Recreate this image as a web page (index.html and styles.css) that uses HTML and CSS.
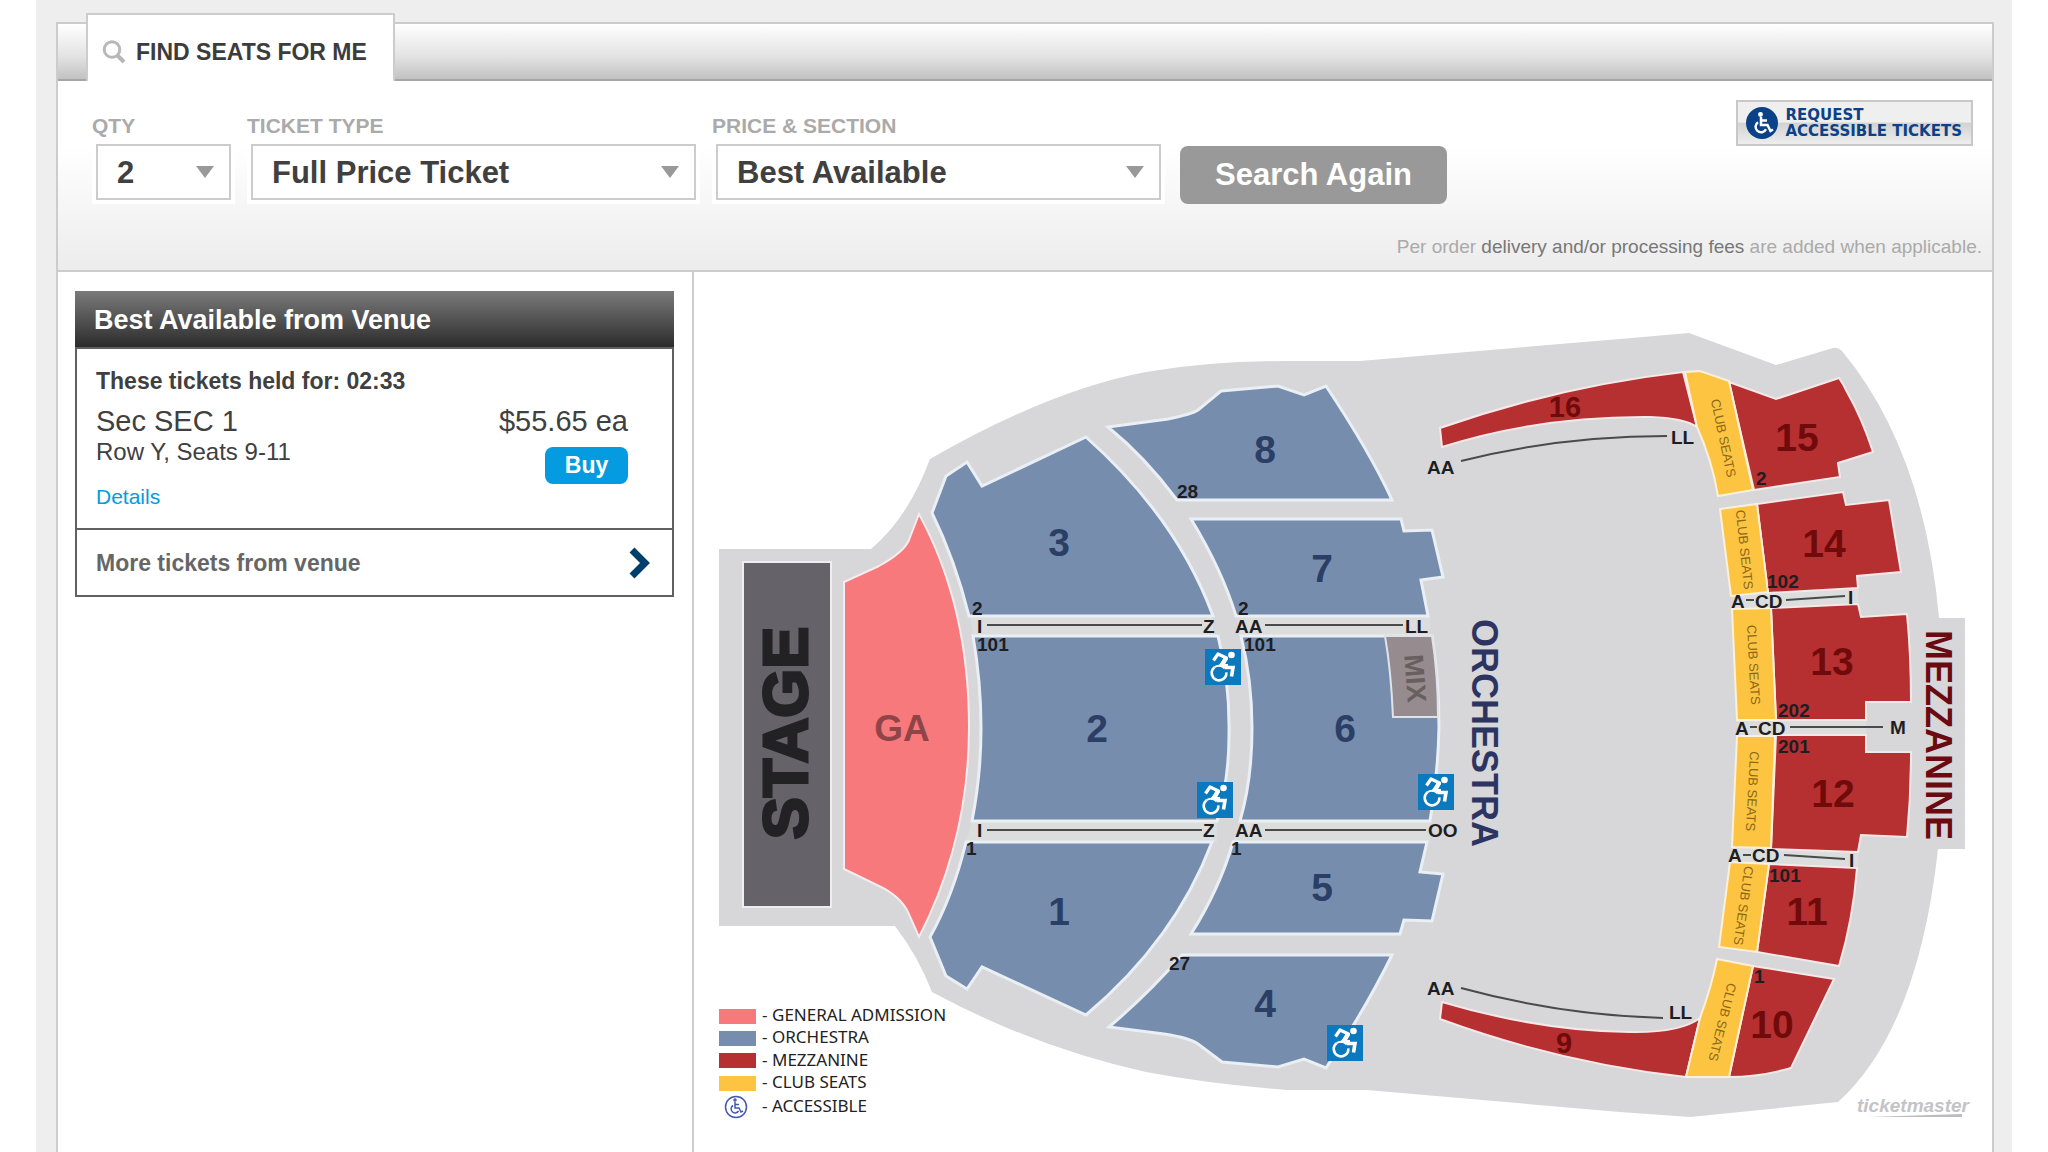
FILE: index.html
```html
<!DOCTYPE html>
<html lang="en">
<head>
<meta charset="utf-8">
<title>Find Seats For Me</title>
<link rel="stylesheet" href="styles.css">
</head>
<body>
<div class="page">
  <main class="panel">
    <nav class="tabs">
      <a class="tab" href="#find">
        <svg class="tab-icon" viewBox="0 0 24 24" aria-hidden="true"><circle cx="10" cy="9.500" r="7.800" fill="none" stroke="#b8b8b8" stroke-width="3"/><path d="M15.500 15.500L22 22" stroke="#b8b8b8" stroke-width="4"/></svg>
        FIND SEATS FOR ME
      </a>
    </nav>

    <section class="search" id="find">
      <div class="search-row">
        <form class="filters">
          <div class="field field-qty">
            <label for="qty">QTY</label>
            <div class="control"><select id="qty"><option>2</option></select></div>
          </div>
          <div class="field field-wide">
            <label for="type">TICKET TYPE</label>
            <div class="control"><select id="type"><option>Full Price Ticket</option></select></div>
          </div>
          <div class="field field-wide">
            <label for="price">PRICE &amp; SECTION</label>
            <div class="control"><select id="price"><option>Best Available</option></select></div>
          </div>
          <button class="search-button" type="button">Search Again</button>
        </form>
        <a class="accessible" href="#accessible">
          <svg class="accessible-icon" viewBox="0 0 34 34" aria-hidden="true"><circle cx="17" cy="17" r="16" fill="#0b4287"/><g fill="none" stroke="#fff" stroke-width="2.500"><circle cx="15.500" cy="8.500" r="1.200"/><path d="M16 11v8h6.500l3 6 2.500-1.500M16 14.500h6"/><path d="M13 16.200a5.500 5.500 0 1 0 8 7"/></g></svg>
          <span>REQUEST<br>ACCESSIBLE TICKETS</span>
        </a>
      </div>
      <p class="fees">Per order <a href="#fees">delivery and/or processing fees</a> are added when applicable.</p>
    </section>

    <div class="content">
      <aside class="sidebar">
        <section class="card">
          <h2 class="card-title">Best Available from Venue</h2>
          <div class="offer">
            <p class="held">These tickets held for: 02:33</p>
            <div class="offer-row">
              <div>
                <p class="big">Sec SEC 1</p>
                <p class="seats">Row Y, Seats 9-11</p>
                <a class="details" href="#details">Details</a>
              </div>
              <div class="offer-buy">
                <p class="big">$55.65 ea</p>
                <button class="buy" type="button">Buy</button>
              </div>
            </div>
          </div>
          <a class="more" href="#more">More tickets from venue
            <svg class="chevron" viewBox="0 0 22 32" aria-hidden="true"><path d="M3 3L16 16L3 29" fill="none" stroke="#003e6b" stroke-width="7"/></svg>
          </a>
        </section>
      </aside>

      <svg class="map" viewBox="694 272 1298 880" role="img" aria-label="Seating chart">
        <defs>
          <g id="wheelchair">
            <rect width="36" height="36" fill="#0a79bd"/>
            <circle cx="26.500" cy="6" r="3.300" fill="#fff"/>
            <path d="M8.500 11.500L13 5L21.500 9L15.500 16.500H23" fill="none" stroke="#fff" stroke-width="3.200" stroke-linejoin="round"/>
            <path d="M19 8l4 2-4.500 8h-5z" fill="#fff"/>
            <path d="M19.500 18.500h8.500l-1.500 9" fill="none" stroke="#fff" stroke-width="3.600"/>
            <path d="M9.500 18.300a7.300 7.300 0 1 0 11.800 5" fill="none" stroke="#fff" stroke-width="2.600"/>
            <path d="M9.500 18.300a7.300 7.300 0 0 1 10 1" fill="none" stroke="#fff" stroke-width="2"/>
          </g>
        </defs>

        <path class="floor" d="M719 549H871Q908 518 930 459Q1050 390 1146 372Q1210 361 1287 361H1360L1620 339L1689 333L1776 365L1833 348Q1838 347 1842 351Q1924 450 1939 618H1965V849H1938Q1918 1030 1838 1102L1690 1117L1620 1112L1367 1090H1287Q1210 1084 1146 1072Q1036 1048 932 992Q918 956 895 926H719Z"/>

        <g class="aisle">
          <path d="M970 616H1213V636H973ZM1236 616H1430V636H1240ZM972 821H1217V842H966ZM1240 821H1430V842H1233Z"/>
          <path d="M1733 596L1858 588V604L1733 609ZM1737 720H1866V735H1737ZM1732 847L1858 852V868L1730 862Z"/>
        </g>

        <rect class="stage" x="743" y="562" width="88" height="345"/>
        <path class="ga" d="M844 582L879 566Q904 552 909 540L919 514Q969 606 969 727Q969 840 919 937L908 912Q900 896 879 886L844 869Z"/>

        <g class="orchestra">
          <path d="M967 462L982 486L1086 437Q1177 518 1213 616H969Q955 560 932 513L946 476Z"/>
          <path d="M973 636H1218Q1230 682 1229 735Q1229 780 1217 821H972Q981 775 981 728Q981 682 973 636Z"/>
          <path d="M966 842H1212Q1175 940 1086 1015L982 967L967 989L946 976L930 937Q953 896 966 842Z"/>
          <path d="M1108 427L1168 419Q1192 414 1198 410L1221 391L1278 386L1304 395L1326 386Q1370 452 1392 500H1177Q1145 457 1108 427Z"/>
          <path d="M1191 519H1401L1404 531L1432 530L1443 577L1421 580L1428 616H1236Q1222 570 1191 519Z"/>
          <path d="M1241 636H1432Q1439 680 1439 727Q1438 775 1430 821H1240Q1252 780 1252 728Q1252 680 1241 636Z"/>
          <path d="M1233 842H1427L1420 872L1443 874L1432 921L1404 920L1400 934H1191Q1220 888 1233 842Z"/>
          <path d="M1182 955H1392Q1365 1010 1326 1068L1304 1059L1278 1067L1222 1062L1198 1044Q1190 1038 1164 1034L1109 1027Q1148 994 1182 955Z"/>
        </g>
        <path class="mix" d="M1385 636H1432Q1438 675 1438 717H1393Q1391 670 1385 636Z"/>

        <g class="mezzanine">
          <path d="M1440 428Q1560 386 1683 372L1697 427Q1684 418 1650 417Q1540 416 1442 447Z"/>
          <path d="M1729 382L1776 399L1839 378Q1844 385 1847 392Q1862 418 1873 452L1838 463L1840 477L1754 490Z"/>
          <path d="M1757 504L1843 492L1846 505L1889 500L1901 572L1857 576L1858 588L1768 593Z"/>
          <path d="M1771 608L1858 604L1861 617L1907 614Q1911 655 1911 702H1866V720H1776Z"/>
          <path d="M1776 735H1866V752H1911Q1911 795 1907 837L1861 835L1858 852L1771 849Z"/>
          <path d="M1769 864L1857 868Q1853 920 1839 966L1757 952Z"/>
          <path d="M1753 966L1834 979L1791 1068Q1760 1077 1729 1077Z"/>
          <path d="M1442 1002Q1540 1031 1630 1032Q1680 1033 1700 1018L1686 1077Q1560 1063 1440 1019Z"/>
        </g>
        <g class="club">
          <path d="M1685 372L1700 371L1729 381L1753 490L1718 496Q1712 460 1697 427Z"/>
          <path d="M1720 509L1757 504L1768 592L1731 596Z"/>
          <path d="M1732 609L1771 608L1776 720H1737Z"/>
          <path d="M1737 736H1775L1771 848L1732 847Z"/>
          <path d="M1730 862L1769 864L1757 952L1719 947Z"/>
          <path d="M1717 959L1753 966L1729 1077H1686L1700 1018Q1712 985 1717 959Z"/>
        </g>

        <g class="rows">
          <path d="M987 625H1202M1265 625H1403M987 830H1202M1265 830H1426"/>
          <path d="M1461 461Q1560 436 1667 436M1461 988Q1560 1015 1663 1018"/>
          <path d="M1746 600H1754M1786 600L1845 596M1750 727H1757M1790 727H1883M1743 855H1751M1784 855L1845 859"/>
        </g>

        <g class="number">
          <text x="1059" y="556">3</text><text x="1097" y="742">2</text><text x="1059" y="925">1</text>
          <text x="1265" y="463">8</text><text x="1322" y="582">7</text><text x="1345" y="742">6</text>
          <text x="1322" y="901">5</text><text x="1265" y="1017">4</text>
        </g>
        <g class="number number-red">
          <text x="1797" y="451">15</text><text x="1824" y="557">14</text><text x="1832" y="675">13</text>
          <text x="1833" y="807">12</text><text x="1807" y="925">11</text><text x="1772" y="1038">10</text>
        </g>
        <g class="number number-red number-small">
          <text x="1565" y="417">16</text><text x="1564" y="1053">9</text>
        </g>
        <text class="ga-name" x="902" y="741">GA</text>
        <text class="stage-name" transform="translate(807 733) rotate(-90)">STAGE</text>
        <text class="zone" transform="translate(1472 733) rotate(90)">ORCHESTRA</text>
        <text class="zone zone-red" transform="translate(1926 735) rotate(90)">MEZZANINE</text>
        <text class="mix-name" transform="translate(1406 679) rotate(86)">MIX</text>
        <g class="club-name">
          <text transform="translate(1719 439) rotate(78)">CLUB SEATS</text>
          <text transform="translate(1740 550) rotate(84)">CLUB SEATS</text>
          <text transform="translate(1749 665) rotate(87)">CLUB SEATS</text>
          <text transform="translate(1748 791) rotate(93)">CLUB SEATS</text>
          <text transform="translate(1739 905) rotate(98)">CLUB SEATS</text>
          <text transform="translate(1718 1021) rotate(104)">CLUB SEATS</text>
        </g>

        <g class="label">
          <text x="1177" y="498">28</text><text x="972" y="615">2</text><text x="977" y="633">I</text><text x="1203" y="633">Z</text><text x="977" y="651">101</text>
          <text x="1238" y="615">2</text><text x="1235" y="633">AA</text><text x="1405" y="633">LL</text><text x="1244" y="651">101</text>
          <text x="977" y="837">I</text><text x="1203" y="837">Z</text><text x="966" y="855">1</text>
          <text x="1235" y="837">AA</text><text x="1428" y="837">OO</text><text x="1231" y="855">1</text><text x="1169" y="970">27</text>
          <text x="1427" y="474">AA</text><text x="1671" y="444">LL</text><text x="1427" y="995">AA</text><text x="1669" y="1019">LL</text>
          <text x="1756" y="485">2</text><text x="1767" y="588">102</text>
          <text x="1731" y="608">A</text><text x="1755" y="608">CD</text><text x="1848" y="604">I</text>
          <text x="1778" y="717">202</text><text x="1735" y="735">A</text><text x="1758" y="735">CD</text><text x="1890" y="734">M</text><text x="1778" y="753">201</text>
          <text x="1728" y="862">A</text><text x="1752" y="862">CD</text><text x="1849" y="867">I</text><text x="1769" y="882">101</text><text x="1754" y="983">1</text>
        </g>

        <use href="#wheelchair" x="1205" y="649"/>
        <use href="#wheelchair" x="1197" y="782"/>
        <use href="#wheelchair" x="1418" y="774"/>
        <use href="#wheelchair" x="1327" y="1025"/>

        <g class="legend">
          <rect x="719" y="1009" width="37" height="15" fill="#f8797b"/><text x="762" y="1021">-</text><text x="772" y="1021">GENERAL ADMISSION</text>
          <rect x="719" y="1031" width="37" height="15" fill="#778dae"/><text x="762" y="1043">-</text><text x="772" y="1043">ORCHESTRA</text>
          <rect x="719" y="1053" width="37" height="15" fill="#b62f31"/><text x="762" y="1066">-</text><text x="772" y="1066">MEZZANINE</text>
          <rect x="719" y="1076" width="37" height="15" fill="#fdc441"/><text x="762" y="1088">-</text><text x="772" y="1088">CLUB SEATS</text>
          <text x="762" y="1112">-</text><text x="772" y="1112">ACCESSIBLE</text>
          <g fill="none" stroke="#4358ae" stroke-width="1.500"><circle cx="736" cy="1107" r="10.500"/><circle cx="735" cy="1100" r="1"/><path d="M735 1102v6h4l2 4 2-1M735 1104.500h4M733 1105.500a4 4 0 1 0 5.500 5.500"/></g>
        </g>

        <text class="brand" x="1857" y="1112">ticketmaster</text>
        <path d="M1868 1117L1962 1114V1117Z" fill="#bcbcc0"/>
      </svg>
    </div>
  </main>
</div>
</body>
</html>
```
FILE: styles.css
```css
* { box-sizing: border-box; }

body {
  margin: 0;
  background: #fff;
  color: #404040;
  font-family: "Liberation Sans", Arial, sans-serif;
  font-size: 23px;
  line-height: 28px;
}

h2, p { margin: 0; }
a { text-decoration: none; }

.page {
  min-height: 100vh;
  margin: 0 36px;
  padding: 22px 18px 0 20px;
  background: #eee;
}

.panel {
  border: solid #ccc;
  border-width: 0 2px;
  background: #fff;
}

/* Tab strip */
.tabs {
  display: flex;
  padding-left: 28px;
  border-top: 2px solid #ccc;
  border-bottom: 2px solid #a6a6a6;
  background: linear-gradient(#fff, #e2e2e2 60%, #c2c2c2);
}

.tab {
  display: flex;
  align-items: center;
  gap: 10px;
  height: 68px;
  margin: -11px 0 -2px;
  padding: 8px 26px 0 14px;
  border: 2px solid #ccc;
  border-bottom: 0;
  background: #fff;
  color: #3c3c3c;
  font-weight: bold;
}

.tab-icon { width: 24px; height: 24px; }

/* Search form */
.search {
  padding: 19px 10px 11px 34px;
  border-bottom: 2px solid #ccc;
  background: linear-gradient(#fff 35%, #ececec);
}

.search-row {
  display: flex;
  justify-content: space-between;
  align-items: flex-start;
}

.filters {
  display: flex;
  flex: 1;
  align-items: flex-end;
  gap: 12px;
  margin-top: 14px;
}

.field {
  display: flex;
  flex-direction: column;
  gap: 2px;
}

.field-qty { width: 143px; }
.field-wide { width: 453px; }

.field label {
  color: #aaa;
  font-size: 21px;
  font-weight: bold;
  line-height: 24px;
}

.control {
  position: relative;
  padding: 4px;
  background: #fff;
}

.control::after {
  content: "";
  position: absolute;
  top: 26px;
  right: 21px;
  border: solid transparent;
  border-width: 12px 9px 0;
  border-top-color: #999;
  pointer-events: none;
}

.control select {
  display: block;
  appearance: none;
  width: 100%;
  height: 56px;
  padding: 0 19px;
  border: 2px solid #ccc;
  border-radius: 0;
  background: #fff;
  color: #404040;
  font: bold 31px "Liberation Sans", Arial, sans-serif;
}

.search-button {
  height: 58px;
  margin-left: 3px;
  padding: 0 35px;
  border: 0;
  border-radius: 8px;
  background: #999;
  color: #fff;
  font: bold 31px "Liberation Sans", Arial, sans-serif;
}

.accessible {
  display: flex;
  align-items: center;
  gap: 6px;
  height: 46px;
  margin-right: 9px;
  padding: 0 9px 0 7px;
  border: 2px solid #c8c8c8;
  background: linear-gradient(#efefef 48%, #d2d2d2 50%, #eee);
  color: #0b4287;
  font: bold 15px/16px "DejaVu Sans", Verdana, sans-serif;
  white-space: nowrap;
}

.accessible-icon { width: 34px; height: 34px; }

.fees {
  margin-top: 31px;
  color: #aaa;
  font-size: 19px;
  line-height: 24px;
  text-align: right;
}

.fees a { color: #777; }

/* Results */
.content { display: flex; }

.sidebar {
  flex: none;
  width: 636px;
  padding: 19px 18px 0 17px;
  border-right: 2px solid #ccc;
}

.card-title {
  padding: 2px 19px 0;
  background: linear-gradient(#7a7a7a, #2c2c2c);
  color: #fff;
  font-size: 27px;
  line-height: 54px;
}

.offer, .more {
  border: 2px solid #606060;
}

.offer { padding: 18px 44px 17px 19px; }

.held { font-weight: bold; }

.offer-row {
  display: flex;
  justify-content: space-between;
  margin-top: 9px;
}

.big {
  font-size: 29px;
  line-height: 34px;
}

.seats { font-size: 24px; }

.details {
  display: block;
  margin-top: 17px;
  color: #049be0;
  font-size: 21px;
}

.offer-buy {
  display: flex;
  flex-direction: column;
  align-items: flex-end;
  gap: 9px;
}

.buy {
  width: 83px;
  height: 37px;
  padding: 0;
  border: 0;
  border-radius: 8px;
  background: #049be0;
  color: #fff;
  font: bold 23px "Liberation Sans", Arial, sans-serif;
}

.more {
  display: flex;
  align-items: center;
  justify-content: space-between;
  height: 67px;
  padding: 0 21px 0 19px;
  border-top: 0;
  color: #666;
  font-weight: bold;
}

.chevron { width: 22px; height: 32px; }

/* Seating chart */
.map {
  display: block;
  flex: 1;
  min-width: 0;
  font-family: "Liberation Sans", Arial, sans-serif;
}

.floor { fill: #d7d6d8; }
.aisle { fill: #dcdddd; }
.stage { fill: #656369; stroke: #eeeef0; stroke-width: 2; }
.ga { fill: #f8797b; stroke: #f4ecee; stroke-width: 2; }
.orchestra { fill: #778dae; stroke: #e9eff5; stroke-width: 3; }
.mix { fill: #968c8f; stroke: #dfe2e8; stroke-width: 2; }
.mezzanine { fill: #b62f31; stroke: #f6e8e8; stroke-width: 2; }
.club { fill: #fdc441; stroke: #faf0dc; stroke-width: 2; }
.rows { fill: none; stroke: #4a4a4c; stroke-width: 2; }

.number, .ga-name, .stage-name, .zone, .mix-name, .club-name { text-anchor: middle; }
.number { fill: #2b3f66; font-size: 39px; font-weight: bold; }
.number-red { fill: #700b0b; }
.number-small { font-size: 29px; }
.ga-name { fill: #8f4548; font-size: 37px; font-weight: bold; }
.stage-name { fill: #222124; stroke: #222124; stroke-width: 3; font-size: 63px; font-weight: bold; }
.zone { fill: #2c3562; font-size: 36px; font-weight: bold; }
.zone-red { fill: #6b0a10; }
.mix-name { fill: #67605f; font-size: 27px; font-weight: bold; }
.club-name { fill: #8a6818; font-size: 13px; }
.label { fill: #1e1e22; font-size: 19px; font-weight: bold; }
.legend text { fill: #222; font-family: "Noto Sans", sans-serif; font-size: 17px; }
.brand { fill: #c3c3c7; font-size: 19px; font-weight: bold; font-style: italic; }
```
